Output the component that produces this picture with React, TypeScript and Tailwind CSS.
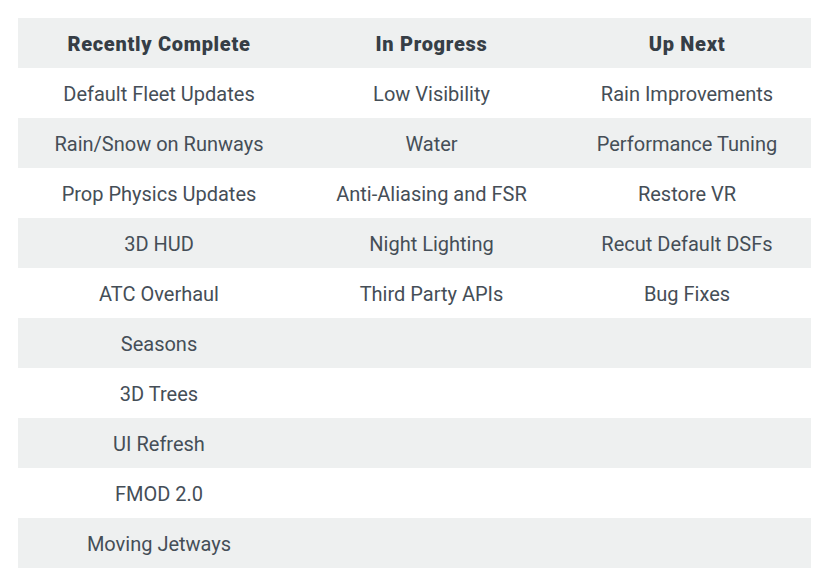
import React from "react";

const rows: [string, string, string][] = [
  ["Default Fleet Updates", "Low Visibility", "Rain Improvements"],
  ["Rain/Snow on Runways", "Water", "Performance Tuning"],
  ["Prop Physics Updates", "Anti-Aliasing and FSR", "Restore VR"],
  ["3D HUD", "Night Lighting", "Recut Default DSFs"],
  ["ATC Overhaul", "Third Party APIs", "Bug Fixes"],
  ["Seasons", "", ""],
  ["3D Trees", "", ""],
  ["UI Refresh", "", ""],
  ["FMOD 2.0", "", ""],
  ["Moving Jetways", "", ""],
];

export default function App() {
  return (
    <div className="w-[832px] h-[587px] bg-white pt-[18px] pl-[18px]" style={{ fontFamily: "Roboto, 'Liberation Sans', sans-serif" }}>
      <div className="w-[793px]">
        <div className="grid grid-cols-[282px_263px_248px] h-[50px] pt-[1px] bg-[#eef0f0] items-center text-center text-[20px] font-black tracking-[0.7px] text-[#363e46]">
          <div>Recently Complete</div>
          <div>In Progress</div>
          <div>Up Next</div>
        </div>
        {rows.map((r, i) => (
          <div
            key={i}
            className={
              "grid grid-cols-[282px_263px_248px] h-[50px] pt-[1px] items-center text-center text-[20px] text-[#454e57] " +
              (i % 2 === 1 ? "bg-[#eef0f0]" : "bg-white")
            }
          >
            <div>{r[0]}</div>
            <div>{r[1]}</div>
            <div>{r[2]}</div>
          </div>
        ))}
      </div>
    </div>
  );
}
